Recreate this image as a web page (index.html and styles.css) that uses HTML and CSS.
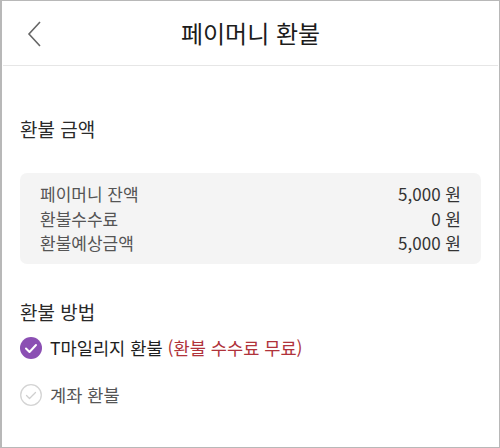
FILE: index.html
```html
<!DOCTYPE html>
<html lang="ko">
<head>
  <meta charset="UTF-8">
  <title>페이머니 환불</title>
  <link rel="stylesheet" href="styles.css">
</head>
<body>
  <div class="screen">

    <!-- 상단 바 -->
    <div class="topbar">
      <div class="back">
        <svg width="16" height="26" viewBox="0 0 16 26">
          <polyline points="13,1 2,13 13,25" fill="none" stroke="#666" stroke-width="1.6"/>
        </svg>
      </div>
      <div class="title">페이머니 환불</div>
      <div></div>
    </div>

    <div class="content">
      <!-- 환불 금액 -->
      <div class="section-title">환불 금액</div>
      <div class="summary">
        <div class="row"><span>페이머니 잔액</span><span class="num">5,000 원</span></div>
        <div class="row"><span>환불수수료</span><span class="num">0 원</span></div>
        <div class="row"><span>환불예상금액</span><span class="num">5,000 원</span></div>
      </div>

      <!-- 환불 방법 -->
      <div class="section-title method">환불 방법</div>
      <div class="options">
        <div class="option checked">
          <svg class="radio" width="22" height="22" viewBox="0 0 22 22">
            <circle cx="11" cy="11" r="11" fill="#8b4fb3"/>
            <polyline points="6,11.5 9.5,15 16,8" fill="none" stroke="#fff" stroke-width="2" stroke-linecap="round" stroke-linejoin="round"/>
          </svg>
          <span class="label">T마일리지 환불 <span class="free">(환불 수수료 무료)</span></span>
        </div>
        <div class="option">
          <svg class="radio" width="22" height="22" viewBox="0 0 22 22">
            <circle cx="11" cy="11" r="10.3" fill="#fff" stroke="#d4d4d4" stroke-width="1.3"/>
            <polyline points="6.5,11.5 9.5,14.5 15.5,8.5" fill="none" stroke="#cfcfcf" stroke-width="1.3" stroke-linecap="round" stroke-linejoin="round"/>
          </svg>
          <span class="label">계좌 환불</span>
        </div>
      </div>
    </div>

  </div>
</body>
</html>
```

FILE: styles.css
```css
html, body {
  margin: 0;
  padding: 0;
  background: #fff;
}

.screen {
  width: 500px;
  height: 448px;
  box-sizing: border-box;
  border: 1px solid #b8b8b8;
  border-left-width: 2px;
  font-family: "Noto Sans CJK KR", "Noto Sans", sans-serif;
  color: #222;
  overflow: hidden;
}

.topbar {
  height: 64px;
  display: grid;
  grid-template-columns: 60px 1fr 60px;
  align-items: center;
  border-bottom: 1px solid #e6e6e6;
  margin: 0 1px;
}

.back {
  padding-left: 24px;
  padding-top: 2px;
  display: flex;
}

.title {
  text-align: center;
  font-size: 24px;
  color: #1c1c1c;
  margin-top: -1px;
}

.content {
  padding: 49px 18px 0 18px;
}

.section-title {
  font-size: 19px;
  line-height: 28px;
  color: #2a2a2a;
}

.summary {
  margin-top: 30px;
  background: #f4f4f4;
  border-radius: 7px;
  padding: 9px 20px 8px;
}

.row {
  display: flex;
  justify-content: space-between;
  font-size: 17px;
  line-height: 24.5px;
  color: #555;
}

.row .num {
  color: #333;
}

.section-title.method {
  margin-top: 34px;
}

.options {
  margin-top: 7px;
  display: flex;
  flex-direction: column;
  gap: 17px;
}

.option {
  display: flex;
  align-items: center;
  gap: 8px;
  height: 30px;
  font-size: 17.6px;
  color: #555;
}

.option.checked {
  color: #1e1e1e;
}

.radio {
  flex: none;
}

.free {
  color: #b0323a;
}
```
